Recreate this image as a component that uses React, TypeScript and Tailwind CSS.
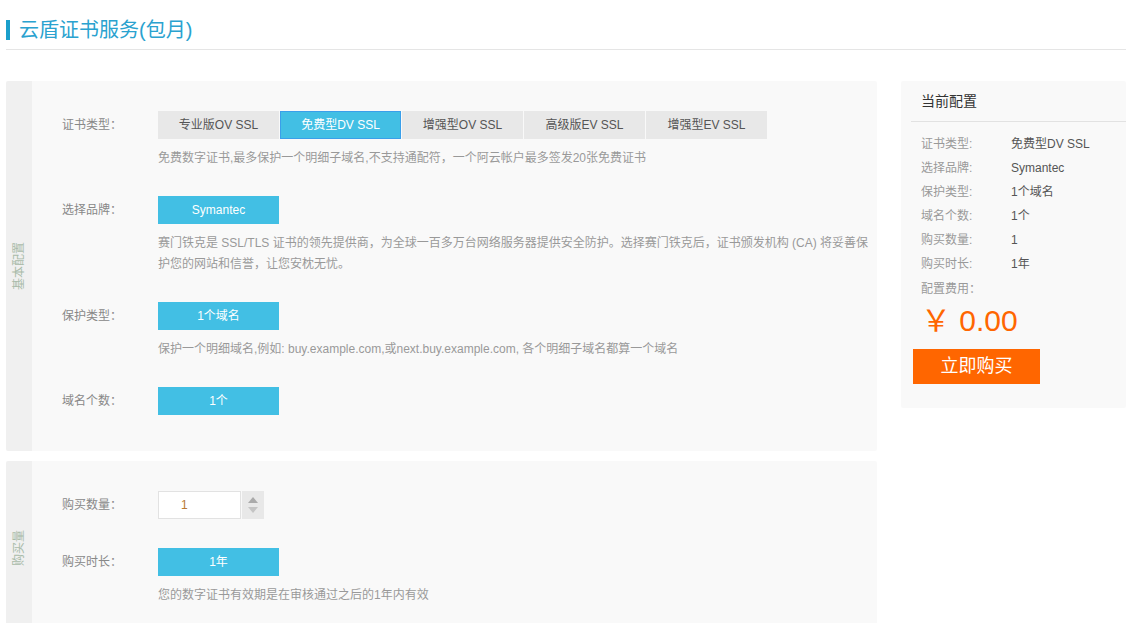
import React from "react";

const font = { fontFamily: '"Liberation Sans", "Noto Sans CJK SC", sans-serif' };

function Btn({ children }: { children: React.ReactNode }) {
  return (
    <div className="w-[121px] h-[28px] bg-[#42bfe4] text-white text-[12px] flex items-center justify-center">
      {children}
    </div>
  );
}

function Row({ label, children }: { label: string; children: React.ReactNode }) {
  return (
    <div className="flex">
      <div className="w-[96px] shrink-0 h-[28px] flex items-center text-[12px] text-[#888]">{label}</div>
      <div className="flex-1 min-w-0">{children}</div>
    </div>
  );
}

function Desc({ children }: { children: React.ReactNode }) {
  return <div className="mt-[9px] text-[12px] leading-[21px] text-[#999] pr-[6px]">{children}</div>;
}

function Side({ text }: { text: string }) {
  return (
    <div className="w-[26px] shrink-0 bg-[#f0f0f0] flex items-center justify-center">
      <div className="-rotate-90 whitespace-nowrap text-[12px] text-[#a9bba9]">{text}</div>
    </div>
  );
}

export default function App() {
  const tabs = ["专业版OV SSL", "免费型DV SSL", "增强型OV SSL", "高级版EV SSL", "增强型EV SSL"];
  const summary: [string, string][] = [
    ["证书类型:", "免费型DV SSL"],
    ["选择品牌:", "Symantec"],
    ["保护类型:", "1个域名"],
    ["域名个数:", "1个"],
    ["购买数量:", "1"],
    ["购买时长:", "1年"],
  ];
  return (
    <div className="w-[1126px] h-[623px] overflow-hidden bg-white pl-[6px]" style={font}>
      <div className="pt-[20px] h-[50px] border-b border-[#e5e5e5] flex items-start">
        <div className="w-[4px] h-[20px] bg-[#1a9fcb]" />
        <div className="ml-[9px] text-[20px] leading-[20px] text-[#2aa2cf]">云盾证书服务(包月)</div>
      </div>
      <div className="flex mt-[31px] gap-[24px]">
        <div className="w-[871px] flex flex-col gap-[10px]">
          <div className="flex bg-[#f9f9f9] rounded-[2px] h-[370px] overflow-hidden">
            <Side text="基本配置" />
            <div className="flex-1 pl-[30px] pt-[30px] flex flex-col gap-[27px]">
              <Row label="证书类型：">
                <div className="flex gap-[1px]">
                  {tabs.map((t, i) =>
                    i === 1 ? (
                      <div key={t} className="w-[121px] h-[28px] bg-[#42bfe4] border border-[#3a9fea] text-white text-[12px] flex items-center justify-center">
                        {t}
                      </div>
                    ) : (
                      <div key={t} className="w-[121px] h-[28px] bg-[#e8e8e8] text-[#555] text-[12px] flex items-center justify-center">
                        {t}
                      </div>
                    )
                  )}
                </div>
                <Desc>免费数字证书,最多保护一个明细子域名,不支持通配符，一个阿云帐户最多签发20张免费证书</Desc>
              </Row>
              <Row label="选择品牌：">
                <Btn>Symantec</Btn>
                <Desc>
                  赛门铁克是 SSL/TLS 证书的领先提供商，为全球一百多万台网络服务器提供安全防护。选择赛门铁克后，证书颁发机构 (CA) 将妥善保护您的网站和信誉，让您安枕无忧。
                </Desc>
              </Row>
              <Row label="保护类型：">
                <Btn>1个域名</Btn>
                <Desc>保护一个明细域名,例如: buy.example.com,或next.buy.example.com, 各个明细子域名都算一个域名</Desc>
              </Row>
              <Row label="域名个数：">
                <Btn>1个</Btn>
              </Row>
            </div>
          </div>
          <div className="flex bg-[#f9f9f9] rounded-[2px] h-[174px] overflow-hidden">
            <Side text="购买量" />
            <div className="flex-1 pl-[30px] pt-[30px] flex flex-col gap-[29px]">
              <Row label="购买数量：">
                <div className="flex gap-[1px]">
                  <div className="w-[83px] h-[28px] bg-white border border-[#e2e2e2] text-[12px] text-[#b87a33] pl-[22px] flex items-center">1</div>
                  <div className="w-[22px] h-[28px] bg-[#e8e8e8] flex flex-col items-center justify-center gap-[4px]">
                    <svg width="10" height="6" viewBox="0 0 10 6"><path d="M5 0 L10 6 L0 6 Z" fill="#aaa" /></svg>
                    <svg width="10" height="6" viewBox="0 0 10 6"><path d="M0 0 L10 0 L5 6 Z" fill="#c4c4c4" /></svg>
                  </div>
                </div>
              </Row>
              <Row label="购买时长：">
                <Btn>1年</Btn>
                <Desc>您的数字证书有效期是在审核通过之后的1年内有效</Desc>
              </Row>
            </div>
          </div>
        </div>
        <div className="w-[225px] h-[327px] bg-[#f9f9f9] rounded-[2px] self-start">
          <div className="ml-[10px] h-[41px] border-b border-[#e2e2e2] pl-[10px] flex items-center text-[14px] text-[#333]">当前配置</div>
          <div className="pl-[20px] pt-[10px]">
            {summary.map(([k, v]) => (
              <div key={k} className="flex h-[24px] items-center text-[12px]">
                <div className="w-[90px] text-[#999]">{k}</div>
                <div className="text-[#555]">{v}</div>
              </div>
            ))}
            <div className="h-[26px] flex items-center text-[12px] text-[#999]">配置费用：</div>
            <div className="h-[38px] flex items-center text-[30px] leading-[30px] text-[#ff6600]">￥ 0.00</div>
          </div>
          <div className="ml-[12px] mt-[9px] w-[127px] h-[35px] bg-[#ff6600] text-white text-[18px] flex items-center justify-center">立即购买</div>
        </div>
      </div>
    </div>
  );
}
